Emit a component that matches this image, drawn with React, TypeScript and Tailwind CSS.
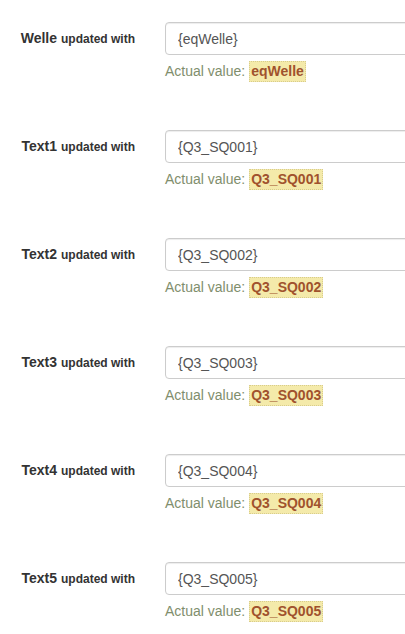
const rows = [
  { name: 'Welle', expr: '{eqWelle}', value: 'eqWelle' },
  { name: 'Text1', expr: '{Q3_SQ001}', value: 'Q3_SQ001' },
  { name: 'Text2', expr: '{Q3_SQ002}', value: 'Q3_SQ002' },
  { name: 'Text3', expr: '{Q3_SQ003}', value: 'Q3_SQ003' },
  { name: 'Text4', expr: '{Q3_SQ004}', value: 'Q3_SQ004' },
  { name: 'Text5', expr: '{Q3_SQ005}', value: 'Q3_SQ005' },
];

function UpdateRow({ name, expr, value }: { name: string; expr: string; value: string }) {
  return (
    <div className="flex h-[108px] items-start">
      <div className="flex h-[33px] w-[165px] shrink-0 items-center justify-end pr-[30px] text-[#333]">
        <span className="text-[14px] font-bold">{name}</span>
        <span className="ml-[4px] text-[12px] font-bold">updated with</span>
      </div>
      <div className="flex-1">
        <input
          readOnly
          value={expr}
          className="block h-[33px] w-[300px] rounded-[4px] border border-[#ccc] bg-white px-[12px] text-[14px] text-[#555] shadow-[inset_0_1px_1px_rgba(0,0,0,0.075)] outline-none"
        />
        <div className="mt-[6px] flex h-[21px] items-center text-[14px] text-[#7f8e6d]">
          <span>Actual value:</span>
          <span className="ml-[4px] flex h-[21px] items-center border border-dotted border-[#d8cc8c] bg-[#f4eaaa] px-[1px] font-bold text-[#a0522d]">
            {value}
          </span>
        </div>
      </div>
    </div>
  );
}

export default function App() {
  return (
    <div className="h-[634px] w-[405px] overflow-hidden bg-white pt-[22px] font-['Liberation_Sans',Arial,sans-serif]">
      {rows.map((row) => (
        <UpdateRow key={row.name} {...row} />
      ))}
    </div>
  );
}
